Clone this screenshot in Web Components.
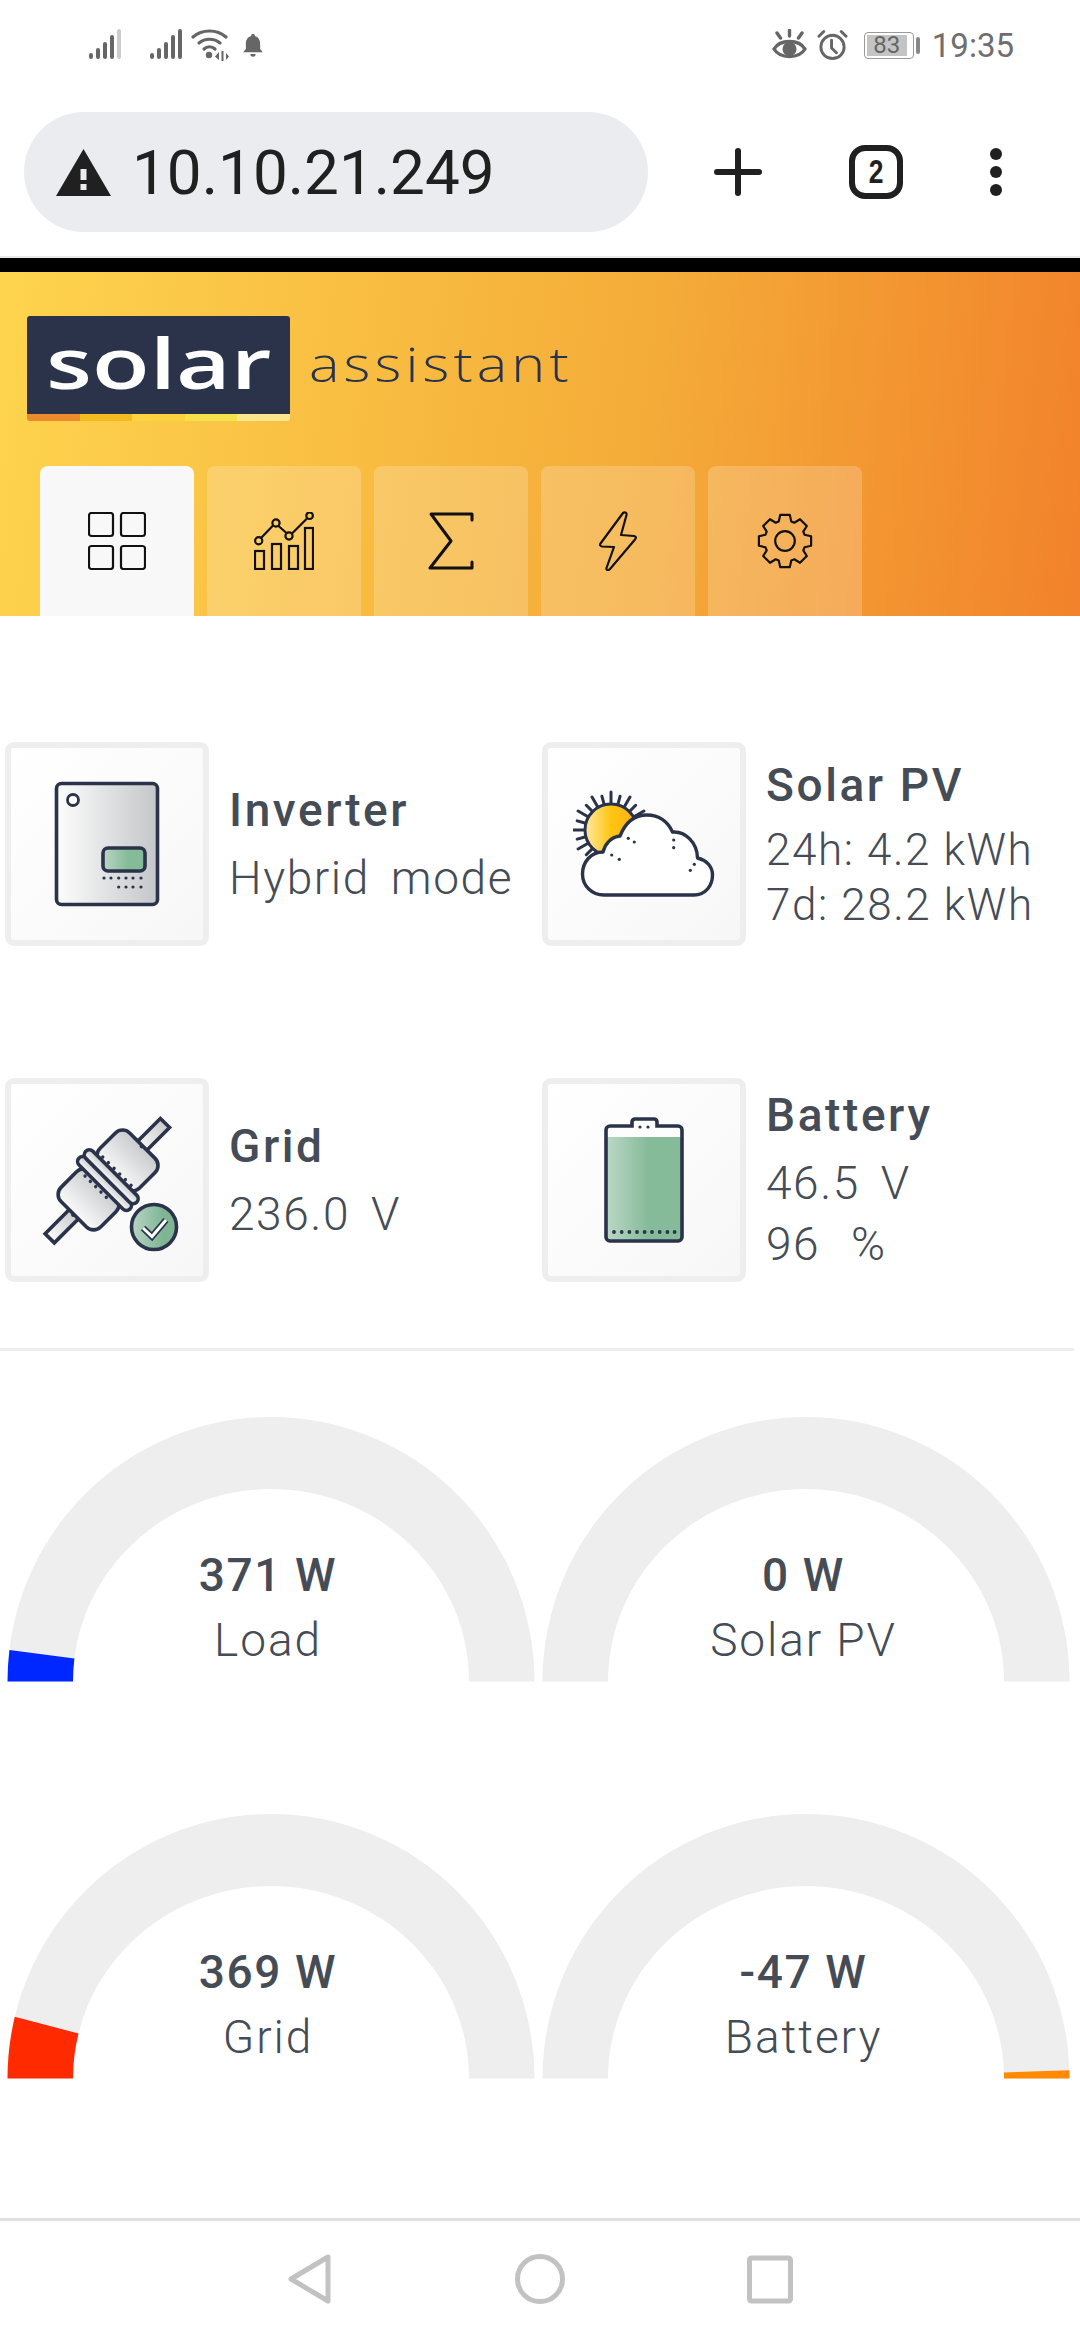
<!DOCTYPE html>
<html>
<head>
<meta charset="utf-8">
<title>solar assistant</title>
<style>
  html, body { margin: 0; padding: 0; background: #fff; }
  body { width: 1080px; height: 2340px; display: flex; flex-direction: column; font-family: Roboto, sans-serif; color: #454c56; }
  dash-page { flex: 1; }
  .yield { font-size: 44px; line-height: 55px; word-spacing: 0; }
</style>
</head>
<body>
<phone-status></phone-status>
<browser-bar url="10.10.21.249" tabs="2"></browser-bar>
<site-header></site-header>
<dash-page>
  <status-grid>
    <status-card title="Inverter" icon="inverter"><div>Hybrid mode</div></status-card>
    <status-card title="Solar PV" icon="solar"><div class="yield">24h: 4.2 kWh</div><div class="yield">7d: 28.2 kWh</div></status-card>
    <status-card title="Grid" icon="grid"><div>236.0 V</div></status-card>
    <status-card title="Battery" icon="battery"><div>46.5 V</div><div style="word-spacing:18px">96 %</div></status-card>
  </status-grid>
  <gauge-grid>
    <power-gauge value="371 W" label="Load" color="#0027ff" from="0" to="0.038"></power-gauge>
    <power-gauge value="0 W" label="Solar PV"></power-gauge>
    <power-gauge value="369 W" label="Grid" color="#ff2a00" from="0" to="0.075"></power-gauge>
    <power-gauge value="-47 W" label="Battery" color="#ff8a00" from="0.99" to="1"></power-gauge>
  </gauge-grid>
</dash-page>
<nav-keys></nav-keys>
<script>
const INK = '#2a334a'
const dots = (xs, y, r = 1.6) => xs.map(x => `<circle cx="${x}" cy="${y}" r="${r}" fill="${INK}"/>`).join('')
const rad = d => d * Math.PI / 180

class PhoneStatus extends HTMLElement {
  constructor() {
    super()
    this.attachShadow({ mode: 'open' }).innerHTML = `
      <style>
        :host { display: flex; height: 90px; align-items: center; padding: 0 66px 0 87px; box-sizing: border-box; color: #666; font-family: Roboto, sans-serif; }
        .left { display: flex; align-items: center; flex: 1; }
        .right { display: flex; align-items: center; }
        svg { display: block; }
        .batt { width: 50px; height: 27px; box-sizing: border-box; border: 1.5px solid #999; border-radius: 4px; padding: 2px; margin-left: 16px; display: flex; }
        .batt span { flex: 0 0 40px; background: #c4c4c4; font-size: 24px; line-height: 20px; text-align: center; color: #666; }
        .nub { width: 4px; height: 17px; background: #888; border-radius: 2px; margin: 0 12px 0 2px; }
        .time { font-size: 33px; font-weight: 400; color: #6e6e6e; }
      </style>
      <div class="left">
        <svg width="36" height="32" viewBox="0 0 36 32"><g fill="#666">
          <rect x="2" y="24" width="4" height="6" rx="2"/><rect x="9" y="19" width="4" height="11" rx="2"/><rect x="16" y="13" width="4" height="17" rx="2"/><rect x="23" y="6" width="4" height="24" rx="2"/></g>
          <rect x="30" y="0" width="4" height="30" rx="2" fill="#ccc"/></svg>
        <svg style="margin-left:25px" width="36" height="32" viewBox="0 0 36 32"><g fill="#666">
          <rect x="2" y="24" width="4" height="6" rx="2"/><rect x="9" y="19" width="4" height="11" rx="2"/><rect x="16" y="13" width="4" height="17" rx="2"/><rect x="23" y="6" width="4" height="24" rx="2"/><rect x="30" y="0" width="4" height="30" rx="2"/></g></svg>
        <svg style="margin-left:7px" width="38" height="32" viewBox="0 0 38 32">
          <g fill="none" stroke="#666" stroke-width="3.200" stroke-linecap="round"><path d="M2 8C11 0 26 0 35 8"/><path d="M8 14C14 9 23 9 29 14"/><path d="M13 20C16 17 21 17 24 20"/></g>
          <circle cx="18" cy="26" r="3.200" fill="#666"/>
          <path d="M28 23l-4 4.500 4 3.500zM30.500 22h2v10h-2zM35 24l3 3.500-3 3.500z" fill="#666"/></svg>
        <svg style="margin-left:14px" width="20" height="25" viewBox="0 0 22 28"><path d="M11 1a2 2 0 0 1 2 2.400C17 4.500 19 8 19 12v6l3 3.500H0L3 18v-6C3 8 5 4.500 9 3.400A2 2 0 0 1 11 1zM8 23.500h6a3 3 0 0 1-6 0z" fill="#666"/></svg>
      </div>
      <div class="right">
        <svg width="35" height="32" viewBox="0 0 35 32"><g fill="none" stroke="#666" stroke-width="3.400" stroke-linecap="round"><path d="M2 20C8 10 27 10 33 20C27 30 8 30 2 20Z"/><path d="M17.500 1v6M5 4l3.500 5M30 4l-3.500 5"/></g><circle cx="17.500" cy="20" r="7" fill="#666"/></svg>
        <svg style="margin-left:10px" width="31" height="32" viewBox="0 0 32 32"><g fill="none" stroke="#666" stroke-width="3" stroke-linecap="round"><circle cx="16" cy="18" r="12"/><path d="M15 11v8l5 5M2 7l5-5M30 7l-5-5"/></g></svg>
        <div class="batt"><span>83</span></div><div class="nub"></div>
        <div class="time">19:35</div>
      </div>`
  }
}

class BrowserBar extends HTMLElement {
  constructor() {
    super()
    const url = this.getAttribute('url')
    const tabs = this.getAttribute('tabs')
    this.attachShadow({ mode: 'open' }).innerHTML = `
      <style>
        :host { display: flex; align-items: flex-start; height: 168px; padding: 22px 0 0 24px; box-sizing: border-box; color: #202020; border-bottom: 2px solid #e8e8e8; }
        .url { width: 624px; height: 120px; border-radius: 60px; background: #ebecf0; display: flex; align-items: center; box-sizing: border-box; padding-left: 32px; font: 62px Roboto, sans-serif; }
        .url svg { margin-right: 21px; }
        .act { display: flex; align-items: center; height: 120px; }
        .tabs { width: 54px; height: 54px; box-sizing: border-box; border: 6px solid #202020; border-radius: 16px; display: flex; align-items: center; justify-content: center; font: bold 33px "Liberation Sans", sans-serif; margin-left: 87px; }
        .tabs span { display: block; transform: scaleX(.8); }
      </style>
      <div class="url">
        <svg width="55" height="47" viewBox="0 0 55 47"><path d="M27.500 0L55 47H0Z" fill="#202020"/><rect x="24.500" y="20" width="6" height="11" fill="#ebecf0"/><rect x="24.500" y="35" width="6" height="6" fill="#ebecf0"/></svg>
        <span>${url}</span>
      </div>
      <div class="act">
        <svg style="margin-left:66px" width="48" height="48" viewBox="0 0 48 48"><path d="M3 24H45M24 3V45" stroke="#202020" stroke-width="6" stroke-linecap="round"/></svg>
        <div class="tabs"><span>${tabs}</span></div>
        <svg style="margin-left:87px" width="12" height="48" viewBox="0 0 12 48"><circle cx="6" cy="6" r="6" fill="#202020"/><circle cx="6" cy="24" r="6" fill="#202020"/><circle cx="6" cy="42" r="6" fill="#202020"/></svg>
      </div>`
  }
}

// eight tooth cog, outline only
function gearPath() {
  let d = ''
  for (let i = 0; i < 8; i++) {
    const a = i * 45 - 90
    const p = [[20.5, a - 18], [26.5, a - 10.5], [26.5, a + 10.5], [20.5, a + 18]]
    p.forEach(([r, t]) => {
      d += `${d ? 'L' : 'M'}${(r * Math.cos(rad(t))).toFixed(1)} ${(r * Math.sin(rad(t))).toFixed(1)}`
    })
  }
  return d + 'Z'
}

class SiteHeader extends HTMLElement {
  constructor() {
    super()
    const ic = 'fill="none" stroke="#111" stroke-width="2.200"'
    const tabIcons = [
      `<svg width="58" height="58" viewBox="0 0 58 58" ${ic}><rect x="1" y="1" width="24" height="23" rx="2.500"/><rect x="33" y="1" width="24" height="23" rx="2.500"/><rect x="1" y="34" width="24" height="23" rx="2.500"/><rect x="33" y="34" width="24" height="23" rx="2.500"/></svg>`,
      `<svg width="60" height="58" viewBox="0 0 60 58" ${ic}><rect x="1" y="39" width="9" height="18"/><rect x="18" y="32" width="9" height="25"/><rect x="35" y="34" width="9" height="23"/><rect x="51" y="16" width="8" height="41"/><path d="M7 26L19 13.500M24.500 14L32.500 21M38 21.500L53 6.500"/><circle cx="4.700" cy="28.700" r="3.600"/><circle cx="22" cy="11" r="3.600"/><circle cx="35" cy="24" r="3.600"/><circle cx="55.600" cy="3.700" r="3.300"/></svg>`,
      `<svg width="46" height="58" viewBox="0 0 46 58"><path d="M44 8V2H3L23 29L2 56H44V50" fill="none" stroke="#111" stroke-width="3" stroke-linejoin="round" stroke-linecap="round"/></svg>`,
      `<svg width="38" height="60" viewBox="0 0 38 60" ${ic}><path d="M24 2C26 0.500 28 2 27.500 4L22 24L35 25C37 25.500 37.500 26.500 36 28.500L11 58C9 60 7 59 7.500 57L15 36L3 35.500C1 35 0.500 34 1.500 32.500Z" stroke-linejoin="round"/></svg>`,
      `<svg width="56" height="56" viewBox="-28 -28 56 56" ${ic}><circle r="9.800"/><path stroke-linejoin="round" d="${gearPath()}"/></svg>`
    ]
    this.attachShadow({ mode: 'open' }).innerHTML = `
      <style>
        :host { display: block; height: 358px; box-sizing: border-box; border-top: 14px solid #000; background: linear-gradient(97deg, #fed44e 0%, #f4ab38 60%, #f2822b 100%); padding-top: 44px; }
        .logo { display: flex; align-items: center; padding-left: 27px; height: 105px; }
        .box { width: 263px; height: 105px; display: flex; flex-direction: column; }
        .word { flex: 1; background: ${INK}; border-radius: 3px 3px 0 0; display: flex; align-items: center; justify-content: center; color: #fff; font: 600 71px/1 "Open Sans", sans-serif; padding-bottom: 7px; }
        .word span { display: block; transform: scaleX(1.33); }
        .stripe { height: 7px; display: flex; border-radius: 0 0 3px 3px; overflow: hidden; }
        .stripe i { flex: 1; }
        .rest { margin-left: 19px; padding-bottom: 10px; font: 300 48px/1 "Open Sans", sans-serif; letter-spacing: 3.400px; color: #2a334a; transform: scaleX(1.2); transform-origin: left; }
        .tabs { display: flex; gap: 13px; padding-left: 40px; margin-top: 45px; }
        .tab { width: 154px; height: 150px; border-radius: 8px 8px 0 0; background: rgba(255,255,255,.2); display: flex; align-items: center; justify-content: center; }
        .tab.on { background: #f8f8f8; }
      </style>
      <div class="logo">
        <div class="box">
          <div class="word"><span>solar</span></div>
          <div class="stripe"><i style="background:#ed8a2c"></i><i style="background:#f3bb22"></i><i style="background:#fbd33f"></i><i style="background:#f5e14c"></i><i style="background:#fbe58d"></i></div>
        </div>
        <div class="rest">assistant</div>
      </div>
      <div class="tabs">${tabIcons.map((s, i) => `<div class="tab${i === 0 ? ' on' : ''}">${s}</div>`).join('')}</div>`
  }
}

// sun rays behind the cloud
const rays = () => {
  let d = ''
  for (let a = 30; a <= 225; a += 15) {
    const c = Math.cos(rad(a)), s = Math.sin(rad(a))
    const o = a % 30 === 0 ? 38 : 35
    d += `M${(38 + 27 * c).toFixed(1)} ${(40 - 27 * s).toFixed(1)}L${(38 + o * c).toFixed(1)} ${(40 - o * s).toFixed(1)}`
  }
  return d
}

const ICONS = {
  inverter: `<svg width="106" height="126" viewBox="0 0 106 126">
    <defs><linearGradient id="m"><stop offset="0.05" stop-color="#fafafa"/><stop offset="1" stop-color="#c4c6c9"/></linearGradient><linearGradient id="g"><stop offset="0" stop-color="#b9d6c4"/><stop offset="0.6" stop-color="#86bb9a"/></linearGradient></defs>
    <rect x="2.500" y="2.500" width="101" height="121" rx="5" fill="url(#m)" stroke="${INK}" stroke-width="3.600"/>
    <circle cx="19" cy="19" r="5.500" fill="#fff" stroke="${INK}" stroke-width="2.800"/>
    <rect x="49" y="67" width="42" height="23" rx="5" fill="url(#g)" stroke="${INK}" stroke-width="3.600"/>
    ${dots([50, 57, 64.7, 72, 79, 87], 97)}${dots([64.7, 72, 79, 87], 106)}</svg>`,
  solar: `<svg width="142" height="108" viewBox="0 0 142 108">
    <defs><linearGradient id="s"><stop offset="0" stop-color="#fde9a5"/><stop offset="0.5" stop-color="#ffc510"/><stop offset="1" stop-color="#fdb018"/></linearGradient></defs>
    <path d="${rays()}" fill="none" stroke="${INK}" stroke-width="3" stroke-linecap="round"/>
    <circle cx="38" cy="40" r="26" fill="url(#s)" stroke="${INK}" stroke-width="3"/>
    <path d="M31 105H121C133 105 139.500 95 139.500 85C139.500 76 133 70 124.500 68C124 52 112 41 99.500 42C95 32 86 25 74 25C62 25 53 31 47 46C38 47 32 54 30 62C18 62 9.500 72 9.500 84C9.500 96 19 105 31 105Z" fill="#fff" stroke="${INK}" stroke-width="3.400" stroke-linejoin="round"/>
    ${dots([55.3], 48.3)}${dots([61.3], 52)}${dots([38.7], 65)}${dots([46.3], 69.3)}${dots([100.7], 50)}${dots([100.7], 57.7)}${dots([121.3], 74.3)}${dots([117.3], 80.3)}</svg>`,
  grid: `<svg width="192" height="192" viewBox="0 0 192 192">
    <defs><linearGradient id="p"><stop offset="0" stop-color="#fafafa"/><stop offset="1" stop-color="#c8cacd"/></linearGradient><linearGradient id="c"><stop offset="0" stop-color="#b9d6c4"/><stop offset="0.7" stop-color="#7fb595"/></linearGradient></defs>
    <g transform="translate(96 97) rotate(-45)" stroke="${INK}" stroke-width="3.600" fill="url(#p)" stroke-linejoin="miter">
      <rect x="46" y="-6.500" width="36" height="13"/>
      <rect x="-81" y="-6.500" width="36" height="13"/>
      <rect x="8" y="-28" width="42" height="56" rx="10"/>
      <rect x="-47" y="-28" width="42" height="56" rx="10"/>
      <rect x="-8.500" y="-36" width="10" height="72" rx="5"/>
      <rect x="1" y="-36" width="10" height="72" rx="5"/>
    </g>
    <g transform="translate(96 97) rotate(-45)" fill="${INK}">
      <circle cx="49" r="2"/><circle cx="-48" r="2"/>
      ${[-20, -12, -4, 4, 12, 20].map(v => `<circle cx="14" cy="${v}" r="1.700"/>`).join('')}
      ${[-19, -11.5, -4, 3.5, 11].map(v => `<circle cx="-12" cy="${v}" r="1.700"/>`).join('')}
    </g>
    <circle cx="143" cy="143" r="22.500" fill="url(#c)" stroke="${INK}" stroke-width="3.600"/>
    <path d="M132 144l9 8.500 14-16.500" fill="none" stroke="${INK}" stroke-width="6.500"/>
    <path d="M132 144l9 8.500 14-16.500" fill="none" stroke="#fff" stroke-width="3"/></svg>`,
  battery: `<svg width="80" height="126" viewBox="0 0 80 126">
    <defs><linearGradient id="b"><stop offset="0" stop-color="#bcd8c6"/><stop offset="0.55" stop-color="#86bb9a"/></linearGradient></defs>
    <path d="M2 13a4 4 0 0 1 4-4H28V5a3 3 0 0 1 3-3H50a3 3 0 0 1 3 3V9H74a4 4 0 0 1 4 4V120a4 4 0 0 1-4 4H6a4 4 0 0 1-4-4Z" fill="#fdfdfd"/>
    <path d="M2 20H78V120a4 4 0 0 1-4 4H6a4 4 0 0 1-4-4Z" fill="url(#b)"/>
    <path d="M2 13a4 4 0 0 1 4-4H28V5a3 3 0 0 1 3-3H50a3 3 0 0 1 3 3V9H74a4 4 0 0 1 4 4V120a4 4 0 0 1-4 4H6a4 4 0 0 1-4-4Z" fill="none" stroke="${INK}" stroke-width="3.600"/>
    ${dots([36, 44], 10)}${dots([10, 17.7, 25.4, 33, 40.6, 48, 55.7, 63.4, 70.6], 115, 1.900)}</svg>`
}

class StatusCard extends HTMLElement {
  constructor() {
    super()
    this.attachShadow({ mode: 'open' }).innerHTML = `
      <style>
        :host { display: flex; align-items: center; min-width: 0; }
        .frame { width: 204px; height: 204px; flex: none; box-sizing: border-box; border: 6px solid #eee; border-radius: 9px; background: linear-gradient(135deg, #fff, #f7f7f7); display: flex; align-items: center; justify-content: center; }
        svg { display: block; }
        .txt { margin-left: 20px; font: 300 46px/61px Roboto, sans-serif; letter-spacing: 1.600px; word-spacing: 8px; color: #454c56; white-space: nowrap; }
        h3 { margin: 0 0 7px; font: inherit; font-weight: 500; letter-spacing: 2.600px; word-spacing: 0; }
      </style>
      <div class="frame">${ICONS[this.getAttribute('icon')]}</div>
      <div class="txt"><h3>${this.getAttribute('title')}</h3><slot></slot></div>`
  }
}

class StatusGrid extends HTMLElement {
  constructor() {
    super()
    this.attachShadow({ mode: 'open' }).innerHTML = `
      <style>
        :host { display: grid; grid-template-columns: 537px 1fr; grid-template-rows: 204px 204px; row-gap: 132px; padding: 0 0 66px 5px; border-bottom: 3px solid #eee; width: 1074px; box-sizing: border-box; }
      </style>
      <slot></slot>`
  }
}

class GaugeGrid extends HTMLElement {
  constructor() {
    super()
    this.attachShadow({ mode: 'open' }).innerHTML = `
      <style>
        :host { display: grid; grid-template-columns: 535.500px 535.500px; row-gap: 132px; padding: 66px 0 0 1.500px; }
      </style>
      <slot></slot>`
  }
}

class DashPage extends HTMLElement {
  constructor() {
    super()
    this.attachShadow({ mode: 'open' }).innerHTML = `
      <style>:host { display: block; padding-top: 126px; }</style>
      <slot></slot>`
  }
}

// half ring, the inner edge is a bit flatter than the outer one
class PowerGauge extends HTMLElement {
  constructor() {
    super()
    const Rx = 263.5, Ry = 264.5, rx = 198, ry = 192.5, cx = 269, cy = 264.5
    const pt = (f, x, y) => {
      const a = Math.PI * (1 - f)
      return `${(cx + x * Math.cos(a)).toFixed(1)} ${(cy - y * Math.sin(a)).toFixed(1)}`
    }
    const seg = (a, b) => `M${pt(a, Rx, Ry)}A${Rx} ${Ry} 0 0 1 ${pt(b, Rx, Ry)}L${pt(b, rx, ry)}A${rx} ${ry} 0 0 0 ${pt(a, rx, ry)}Z`
    const color = this.getAttribute('color')
    const from = Number(this.getAttribute('from'))
    const to = Number(this.getAttribute('to'))
    this.attachShadow({ mode: 'open' }).innerHTML = `
      <style>
        :host { display: block; height: 264.500px; position: relative; }
        svg { display: block; }
        .mid { position: absolute; left: 0; width: 533px; top: 124px; text-align: center; font: 300 46px/62px Roboto, sans-serif; letter-spacing: 1.900px; color: #454c56; }
        b { display: block; font-weight: 500; line-height: 68px; letter-spacing: 1.600px; }
      </style>
      <svg width="536" height="265" viewBox="0 0 536 265"><path d="${seg(0, 1)}" fill="#eeeeee"/>${color ? `<path d="${seg(from, to)}" fill="${color}"/>` : ''}</svg>
      <div class="mid"><b>${this.getAttribute('value')}</b>${this.getAttribute('label')}</div>`
  }
}

class NavKeys extends HTMLElement {
  constructor() {
    super()
    this.attachShadow({ mode: 'open' }).innerHTML = `
      <style>
        :host { display: flex; height: 122px; box-sizing: border-box; border-top: 3px solid #e0e0e0; align-items: flex-start; padding: 33px 0 0 288px; background: #fff; }
        svg { display: block; }
      </style>
      <svg width="43" height="50" viewBox="0 0 43 50"><path d="M40 3L3 25L40 47Z" fill="none" stroke="#c2c2c2" stroke-width="5" stroke-linejoin="round"/></svg>
      <svg style="margin-left:184px" width="50" height="50" viewBox="0 0 50 50"><circle cx="25" cy="25" r="22.500" fill="none" stroke="#c2c2c2" stroke-width="5"/></svg>
      <svg style="margin-left:182px" width="46" height="50" viewBox="0 0 46 50"><rect x="2.500" y="4" width="41" height="43" rx="2" fill="none" stroke="#c2c2c2" stroke-width="5"/></svg>`
  }
}

customElements.define('phone-status', PhoneStatus)
customElements.define('browser-bar', BrowserBar)
customElements.define('site-header', SiteHeader)
customElements.define('status-card', StatusCard)
customElements.define('status-grid', StatusGrid)
customElements.define('gauge-grid', GaugeGrid)
customElements.define('dash-page', DashPage)
customElements.define('power-gauge', PowerGauge)
customElements.define('nav-keys', NavKeys)
</script>
</body>
</html>
